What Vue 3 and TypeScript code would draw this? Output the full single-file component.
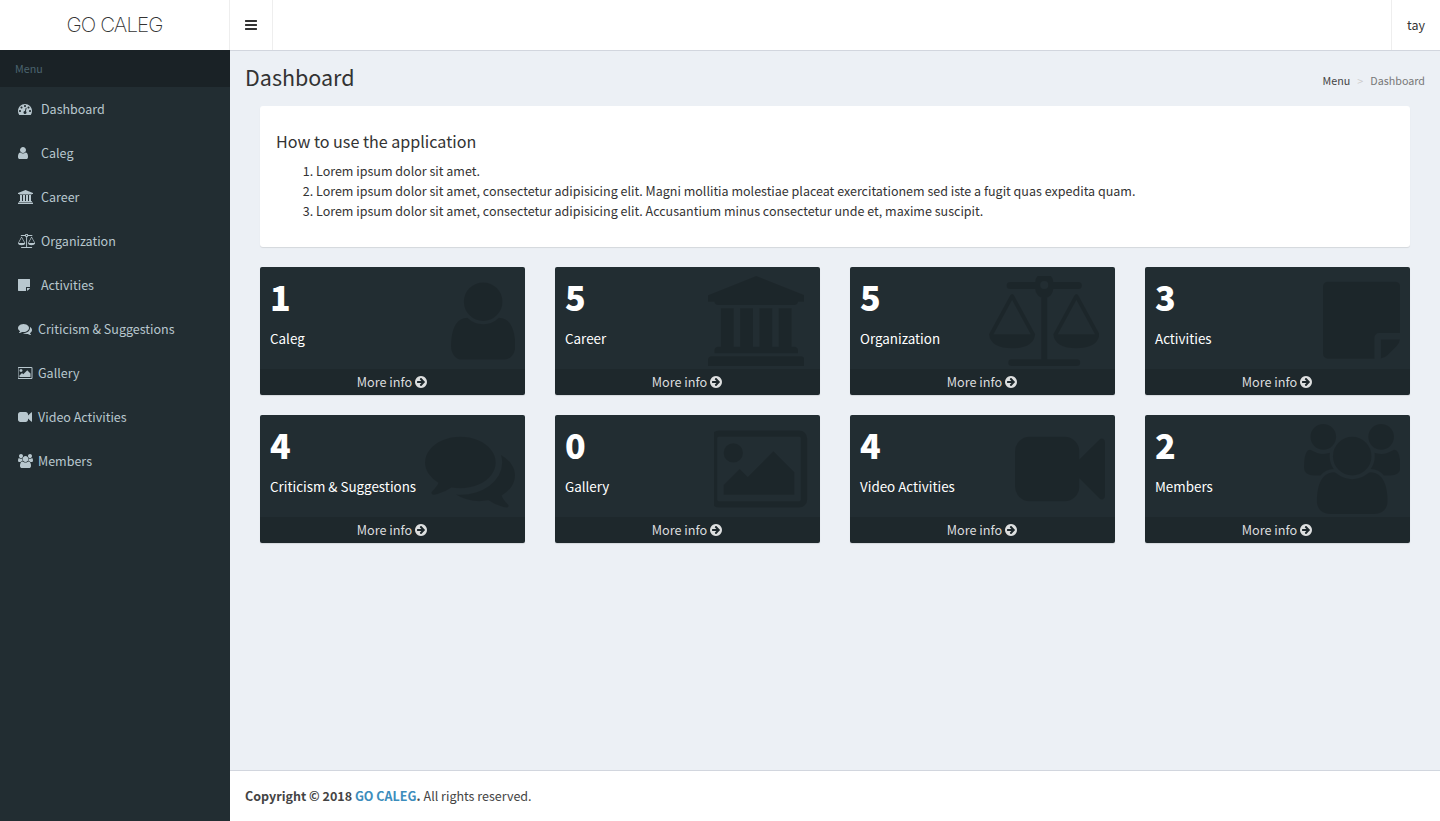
<template>
  <div class="app">
    <header class="topbar">
      <a class="logo">GO CALEG</a>
      <button class="toggle" type="button" aria-label="Toggle menu">
        <svg class="toggle-icon" viewBox="0 0 1792 1792"><path fill="currentColor" :d="barsPath" /></svg>
      </button>
      <div class="topbar-fill"></div>
      <div class="user">tay</div>
    </header>

    <div class="body">
      <aside class="sidebar">
        <div class="menu-label">Menu</div>
        <ul class="menu">
          <li v-for="item in menu" :key="item.label" class="menu-item">
            <span class="menu-icon" :class="{ narrow: item.narrow }">
              <svg :viewBox="icons[item.icon]!.box"><path fill="currentColor" :d="icons[item.icon]!.d" /></svg>
            </span>
            <span>{{ item.label }}</span>
          </li>
        </ul>
      </aside>

      <div class="main">
        <div class="content">
          <div class="page-head">
            <h1>Dashboard</h1>
            <ol class="crumbs">
              <li>Menu</li>
              <li class="sep">&gt;</li>
              <li class="current">Dashboard</li>
            </ol>
          </div>

          <section class="intro">
            <h3>How to use the application</h3>
            <ol>
              <li>Lorem ipsum dolor sit amet.</li>
              <li>Lorem ipsum dolor sit amet, consectetur adipisicing elit. Magni mollitia molestiae placeat exercitationem sed iste a fugit quas expedita quam.</li>
              <li>Lorem ipsum dolor sit amet, consectetur adipisicing elit. Accusantium minus consectetur unde et, maxime suscipit.</li>
            </ol>
          </section>

          <div class="cards">
            <div v-for="card in cards" :key="card.label" class="card">
              <div class="card-inner">
                <h3>{{ card.count }}</h3>
                <p>{{ card.label }}</p>
              </div>
              <svg class="card-icon" :class="{ inset: card.inset }" :viewBox="icons[card.icon]!.box">
                <path fill="currentColor" :d="icons[card.icon]!.d" />
              </svg>
              <a class="card-foot">
                More info
                <svg class="arrow" viewBox="0 0 1792 1792"><path fill="currentColor" :d="arrowPath" /></svg>
              </a>
            </div>
          </div>
        </div>

        <footer class="footer">
          <strong>Copyright © 2018 <a>GO CALEG</a>.</strong> All rights reserved.
        </footer>
      </div>
    </div>
  </div>
</template>

<script setup lang="ts">
interface Icon {
  box: string
  d: string
}

const barsPath =
  'M1664 1344v128q0 26-19 45t-45 19h-1408q-26 0-45-19t-19-45v-128q0-26 19-45t45-19h1408q26 0 45 19t19 45zm0-512v128q0 26-19 45t-45 19h-1408q-26 0-45-19t-19-45v-128q0-26 19-45t45-19h1408q26 0 45 19t19 45zm0-512v128q0 26-19 45t-45 19h-1408q-26 0-45-19t-19-45v-128q0-26 19-45t45-19h1408q26 0 45 19t19 45z'

const arrowPath =
  'M1412 897q0-27-18-45l-91-91-362-362q-18-18-45-18t-45 18l-91 91q-18 18-18 45t18 45l189 189h-502q-26 0-45 19t-19 45v128q0 26 19 45t45 19h502l-189 189q-19 19-19 45t19 45l91 91q18 18 45 18t45-18l362-362 91-91q18-18 18-45zm252-1q0 209-103 385.5t-279.5 279.5-385.5 103-385.5-103-279.5-279.5-103-385.5 103-385.5 279.5-279.5 385.5-103 385.5 103 279.5 279.5 103 385.5z'

const icons: Record<string, Icon> = {
  dashboard: {
    box: '0 0 1792 1792',
    d: 'M384 1152q0-53-37.5-90.5t-90.5-37.5-90.5 37.5-37.5 90.5 37.5 90.5 90.5 37.5 90.5-37.5 37.5-90.5zm192-448q0-53-37.5-90.5t-90.5-37.5-90.5 37.5-37.5 90.5 37.5 90.5 90.5 37.5 90.5-37.5 37.5-90.5zm428 481l101-382q6-26-7.5-48.5t-38.5-29.5-48 6.5-30 39.5l-101 382q-60 5-107 43.5t-63 98.5q-20 77 20 146t117 89 146-20 89-117q16-60-6-117t-72-91zm660-33q0-53-37.5-90.5t-90.5-37.5-90.5 37.5-37.5 90.5 37.5 90.5 90.5 37.5 90.5-37.5 37.5-90.5zm-640-640q0-53-37.5-90.5t-90.5-37.5-90.5 37.5-37.5 90.5 37.5 90.5 90.5 37.5 90.5-37.5 37.5-90.5zm448 192q0-53-37.5-90.5t-90.5-37.5-90.5 37.5-37.5 90.5 37.5 90.5 90.5 37.5 90.5-37.5 37.5-90.5zm320 448q0 261-141 483-19 29-54 29h-1402q-35 0-54-29-141-221-141-483 0-182 71-348t191-286 286-191 348-71 348 71 286 191 191 286 71 348z',
  },
  user: {
    box: '256 0 1280 1792',
    d: 'M1536 1399q0 109-62.5 187t-150.5 78h-854q-88 0-150.5-78t-62.5-187q0-85 8.5-160.5t31.5-152 58.5-131 94-89 134.5-34.5q131 128 313 128t313-128q76 0 134.5 34.5t94 89 58.5 131 31.5 152 8.5 160.5zm-256-887q0 159-112.5 271.5t-271.5 112.5-271.5-112.5-112.5-271.5 112.5-271.5 271.5-112.5 271.5 112.5 112.5 271.5z',
  },
  bank: {
    box: '0 0 1920 1792',
    d: 'M960 0l960 384v128h-128q0 26-20.5 45t-48.5 19h-1526q-28 0-48.5-19t-20.5-45h-128v-128zm-704 640h256v768h128v-768h256v768h128v-768h256v768h128v-768h256v768h59q28 0 48.5 19t20.5 45v64h-1664v-64q0-26 20.5-45t48.5-19h59v-768zm1595 960q28 0 48.5 19t20.5 45v128h-1920v-128q0-26 20.5-45t48.5-19h1782z',
  },
  scale: {
    box: '0 0 2200 1792',
    d: 'M420 120h500a180 180 0 0 1 360 0h500a70 70 0 0 1 0 140h-500a180 180 0 0 1-360 0h-500a70 70 0 0 1 0-140zM1100 100a80 80 0 0 0 0 160a80 80 0 0 0 0-160zM1040 340h120v1320h-120zM450 1660h1300a66 66 0 0 1 0 132h-1300a66 66 0 0 1 0-132zM460 360q25 0 40 30l420 770q-30 280-460 280t-460-280l420-770q15-30 40-30zM460 480l-370 680h740zM1740 360q25 0 40 30l420 770q-30 280-460 280t-460-280l420-770q15-30 40-30zM1740 480l-370 680h740z',
  },
  note: {
    box: '0 0 1536 1792',
    d: 'M1024 1232v416h-928q-40 0-68-28t-28-68v-1344q0-40 28-68t68-28h1344q40 0 68 28t28 68v928h-416q-40 0-68 28t-28 68zm128 32h381q-15 82-65 132l-184 184q-50 50-132 65v-381z',
  },
  comments: {
    box: '0 0 1792 1792',
    d: 'M1408 768q0 139-94 257t-256.5 186.5-353.5 68.5q-86 0-176-16-124 88-278 128-36 9-86 16h-3q-11 0-20.5-8t-11.5-21q-1-3-1-6.5t.5-6.5 2-6l2.5-5 3.5-5.5 4-5 4.5-5 4-4.5q5-6 23-25t26-29.5 22.5-29 25-38.5 20.5-44q-124-72-195-177t-71-224q0-139 94-257t256.5-186.5 353.5-68.5 353.5 68.5 256.5 186.5 94 257zm384 256q0 120-71 224.5t-195 176.5q10 24 20.5 44t25 38.5 22.5 29 26 29.5 23 25q1 1 4 4.5t4.5 5 4 5 3.5 5.5l2.5 5 2 6 .5 6.5-1 6.5q-3 14-13 22t-22 7q-50-7-86-16-154-40-278-128-90 16-176 16-271 0-472-132 58 4 88 4 161 0 309-45t264-129q125-92 192-212t67-254q0-77-23-152 129 71 204 178t75 230z',
  },
  picture: {
    box: '0 0 1920 1792',
    d: 'M576 576q0 80-56 136t-136 56-136-56-56-136 56-136 136-56 136 56 56 136zm1024 384v448h-1408v-192l320-320 160 160 512-512zm96-704h-1600q-13 0-22.5 9.5t-9.5 22.5v1216q0 13 9.5 22.5t22.5 9.5h1600q13 0 22.5-9.5t9.5-22.5v-1216q0-13-9.5-22.5t-22.5-9.5zm160 32v1216q0 66-47 113t-113 47h-1600q-66 0-113-47t-47-113v-1216q0-66 47-113t113-47h1600q66 0 113 47t47 113z',
  },
  video: {
    box: '0 0 1792 1792',
    d: 'M1792 352v1088q0 42-39 59-13 5-25 5-27 0-45-19l-403-403v166q0 119-84.5 203.5t-203.5 84.5h-704q-119 0-203.5-84.5t-84.5-203.5v-704q0-119 84.5-203.5t203.5-84.5h704q119 0 203.5 84.5t84.5 203.5v165l403-402q18-19 45-19 12 0 25 5 39 17 39 59z',
  },
  users: {
    box: '0 0 1920 1792',
    d: 'M593 896q-162 5-265 128h-134q-82 0-138-40.5t-56-118.5q0-353 124-353 6 0 43.5 21t97.5 42.5 119 21.5q67 0 133-23-5 37-5 66 0 139 81 256zm1071 637q0 120-73 189.5t-194 69.5h-874q-121 0-194-69.5t-73-189.5q0-53 3.5-103.5t14-109 26.5-108.5 43-97.5 62-81 85.5-53.5 111.5-20q10 0 43 21.5t73 48 107 48 135 21.5 135-21.5 107-48 73-48 43-21.5q61 0 111.5 20t85.5 53.5 62 81 43 97.5 26.5 108.5 14 109 3.5 103.5zm-1024-1277q0 106-75 181t-181 75-181-75-75-181 75-181 181-75 181 75 75 181zm704 384q0 159-112.5 271.5t-271.5 112.5-271.5-112.5-112.5-271.5 112.5-271.5 271.5-112.5 271.5 112.5 112.5 271.5zm576 225q0 78-56 118.5t-138 40.5h-134q-103-123-265-128 81-117 81-256 0-29-5-66 66 23 133 23 59 0 119-21.5t97.5-42.5 43.5-21q124 0 124 353zm-128-609q0 106-75 181t-181 75-181-75-75-181 75-181 181-75 181 75 75 181z',
  },
}

const menu = [
  { label: 'Dashboard', icon: 'dashboard', narrow: false },
  { label: 'Caleg', icon: 'user', narrow: false },
  { label: 'Career', icon: 'bank', narrow: false },
  { label: 'Organization', icon: 'scale', narrow: false },
  { label: 'Activities', icon: 'note', narrow: false },
  { label: 'Criticism & Suggestions', icon: 'comments', narrow: true },
  { label: 'Gallery', icon: 'picture', narrow: true },
  { label: 'Video Activities', icon: 'video', narrow: true },
  { label: 'Members', icon: 'users', narrow: true },
]

const cards = [
  { count: 1, label: 'Caleg', icon: 'user', inset: false },
  { count: 5, label: 'Career', icon: 'bank', inset: true },
  { count: 5, label: 'Organization', icon: 'scale', inset: true },
  { count: 3, label: 'Activities', icon: 'note', inset: false },
  { count: 4, label: 'Criticism & Suggestions', icon: 'comments', inset: false },
  { count: 0, label: 'Gallery', icon: 'picture', inset: false },
  { count: 4, label: 'Video Activities', icon: 'video', inset: false },
  { count: 2, label: 'Members', icon: 'users', inset: false },
]
</script>

<style>
body {
  margin: 0;
}
</style>

<style scoped>
.app {
  min-height: 100vh;
  display: flex;
  flex-direction: column;
  font-family: "Noto Sans CJK SC", "Noto Sans", sans-serif;
  font-size: 12.53px;
  line-height: 20px;
  color: #333;
  background: #ecf0f5;
}

.topbar {
  height: 50px;
  display: flex;
  background: #fff;
}

.logo {
  width: 229px;
  border-right: 1px solid #eee;
  text-align: center;
  font-family: Inter, "Liberation Sans", sans-serif;
  font-weight: 200;
  font-size: 20.5px;
  line-height: 50px;
  letter-spacing: -0.9px;
  color: #333;
}

.toggle {
  width: 43px;
  padding: 0;
  border: 0;
  border-right: 1px solid #eee;
  background: none;
  color: #333;
  display: flex;
  align-items: center;
  justify-content: center;
}

.toggle-icon {
  width: 14px;
  height: 14px;
}

.topbar-fill {
  flex: 1;
}

.user {
  width: 33px;
  padding-right: 15px;
  border-left: 1px solid #eee;
  text-align: right;
  line-height: 50px;
}

.body {
  flex: 1;
  display: flex;
}

.sidebar {
  width: 230px;
  flex: none;
  background: #222d32;
  color: #b8c7ce;
}

.menu-label {
  height: 37px;
  padding-left: 15px;
  background: #1a2226;
  color: #4b646f;
  font-size: 10.74px;
  line-height: 37px;
}

.menu {
  list-style: none;
  margin: 0;
  padding: 0;
}

.menu-item {
  height: 44px;
  padding-left: 18px;
  display: flex;
  align-items: center;
}

.menu-icon {
  width: 23px;
  flex: none;
  display: flex;
  align-items: center;
}

.menu-icon.narrow {
  width: 20px;
}

.menu-icon svg {
  height: 14px;
  width: auto;
}

.main {
  flex: 1;
  min-width: 0;
  display: flex;
  flex-direction: column;
  border-top: 1px solid #d2d6de;
}

.content {
  flex: 1;
  padding: 0 15px;
}

.page-head {
  height: 55px;
  display: flex;
  align-items: flex-start;
  justify-content: space-between;
}

.page-head h1 {
  margin: 0;
  font-size: 21.5px;
  font-weight: 400;
  line-height: 52px;
}

.crumbs {
  list-style: none;
  margin: 20px 0 0;
  padding: 0;
  display: flex;
  gap: 7px;
  font-size: 10.74px;
  color: #444;
}

.crumbs .sep {
  color: #ccc;
}

.crumbs .current {
  color: #777;
}

.intro {
  margin: 0 15px 20px;
  padding: 24px 16px 26px;
  background: #fff;
  border-radius: 3px;
  box-shadow: 0 1px 1px rgba(0, 0, 0, 0.1);
}

.intro h3 {
  margin: 0 0 9px;
  font-size: 16.1px;
  font-weight: 400;
  line-height: 22px;
}

.intro ol {
  margin: 0;
  padding-left: 40px;
}

.cards {
  margin: 0 15px;
  display: grid;
  grid-template-columns: repeat(4, 1fr);
  gap: 20px 30px;
}

.card {
  position: relative;
  height: 128px;
  display: flex;
  flex-direction: column;
  background: #222d32;
  border-radius: 2px;
  box-shadow: 0 1px 1px rgba(0, 0, 0, 0.1);
  color: #fff;
  overflow: hidden;
}

.card-inner {
  flex: 1;
  padding: 9px 10px 10px;
}

.card-inner h3 {
  margin: 0 0 10px;
  font-size: 34px;
  font-weight: 900;
  line-height: 42px;
}

.card-inner p {
  margin: 0;
  font-size: 13.4px;
  line-height: 20px;
}

.card-icon {
  position: absolute;
  top: 9px;
  right: 10px;
  height: 90px;
  width: auto;
  color: rgba(0, 0, 0, 0.15);
}

.card-icon.inset {
  right: 16px;
}

.card-foot {
  height: 26px;
  display: flex;
  align-items: center;
  justify-content: center;
  gap: 2px;
  background: rgba(0, 0, 0, 0.1);
  color: rgba(255, 255, 255, 0.85);
  font-size: 12.7px;
  position: relative;
}

.arrow {
  width: 14px;
  height: 14px;
}

.footer {
  height: 50px;
  padding: 0 15px;
  display: flex;
  align-items: center;
  gap: 3px;
  background: #fff;
  border-top: 1px solid #d2d6de;
  color: #444;
}

.footer a {
  color: #3c8dbc;
}
</style>
